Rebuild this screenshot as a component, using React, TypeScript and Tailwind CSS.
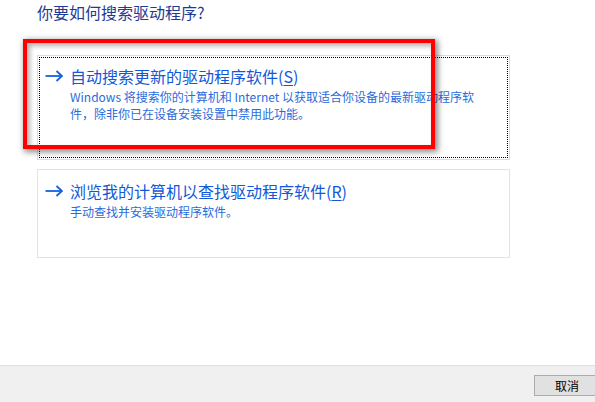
import React from 'react';

const font = { fontFamily: '"Noto Sans CJK SC", "Noto Sans", sans-serif' };

function Arrow() {
  return (
    <svg width="18" height="12" viewBox="0 0 18 12" className="shrink-0">
      <path d="M0.5 6 H16.5" stroke="#1560e0" strokeWidth="1.8" fill="none" />
      <path d="M11.5 1 L17 6 L11.5 11" stroke="#1560e0" strokeWidth="1.8" fill="none" />
    </svg>
  );
}

function CommandLink({
  title,
  hotkey,
  lines,
}: {
  title: string;
  hotkey: string;
  lines: string[];
}) {
  return (
    <div className="flex">
      <div className="w-[25px] shrink-0 pt-[4px]">
        <Arrow />
      </div>
      <div>
        <div className="text-[16px] leading-[20px] text-[#1258d8] whitespace-nowrap">
          {title}(<span className="underline underline-offset-2">{hotkey}</span>)
        </div>
        <div className="mt-[2px] text-[12px] leading-[17px] text-[#2a6bdb] whitespace-nowrap">
          {lines.map((l) => (
            <div key={l}>{l}</div>
          ))}
        </div>
      </div>
    </div>
  );
}

export default function App() {
  return (
    <div className="relative w-[595px] h-[402px] overflow-hidden bg-white flex flex-col" style={font}>
      <div className="flex-1">
        <div className="pl-[37px] pt-[2px] text-[16px] leading-[20px] text-[#1e3a96]">
          你要如何搜索驱动程序?
        </div>

        {/* first option, focused */}
        <div className="ml-[37px] mt-[33px] w-[473px] h-[105px] border border-[#c9dff3]">
          <div className="m-[1px] h-[101px] border border-dotted border-black pl-[5px] pt-[8px]">
            <CommandLink
              title="自动搜索更新的驱动程序软件"
              hotkey="S"
              lines={[
                'Windows 将搜索你的计算机和 Internet 以获取适合你设备的最新驱动程序软',
                '件，除非你已在设备安装设置中禁用此功能。',
              ]}
            />
          </div>
        </div>

        {/* second option */}
        <div className="ml-[37px] mt-[9px] w-[473px] h-[89px] border border-[#e3e3e3] pl-[7px] pt-[11px]">
          <CommandLink
            title="浏览我的计算机以查找驱动程序软件"
            hotkey="R"
            lines={['手动查找并安装驱动程序软件。']}
          />
        </div>
      </div>

      {/* footer */}
      <div className="h-[37px] shrink-0 border-t border-[#dfdfdf] bg-[#f0f0f0] flex justify-end pt-[9px]">
        <button className="w-[66px] h-[21px] mr-[-5px] border border-[#adadad] bg-[#e1e1e1] text-[12px] leading-[19px] text-black">
          取消
        </button>
      </div>

      {/* red annotation box */}
      <div className="absolute left-[23px] top-[39px] w-[412px] h-[110px] border-[4px] border-[#ff0000] shadow-[2px_2px_6px_1px_rgba(0,0,0,0.45),inset_3px_3px_5px_rgba(0,0,0,0.3)]" />
    </div>
  );
}
